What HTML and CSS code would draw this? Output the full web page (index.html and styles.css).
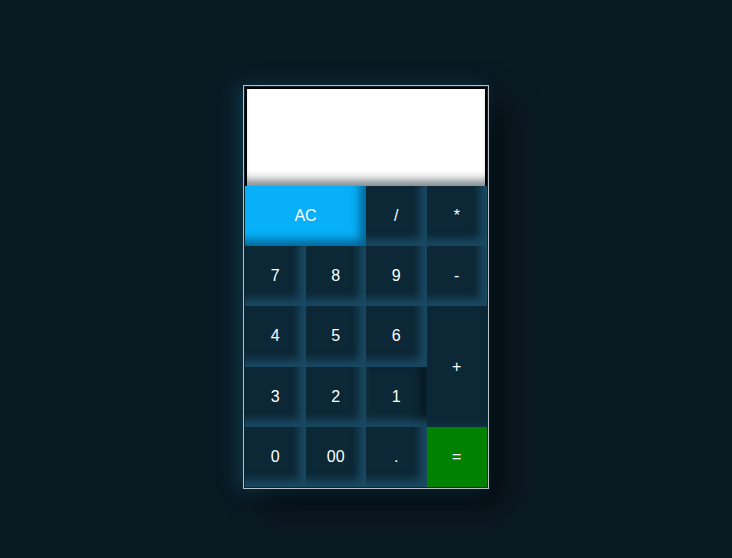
FILE: index.html
```html
<!DOCTYPE html>
<html>
<head>
<meta charset="utf-8">
<link rel="stylesheet" href="styles.css">
</head>
<body>
<div class="page">
  <div class="calc">
    <div class="display"></div>
    <div class="keys">
      <button class="key ac">AC</button>
      <button class="key">/</button>
      <button class="key">*</button>
      <button class="key">7</button>
      <button class="key">8</button>
      <button class="key">9</button>
      <button class="key">-</button>
      <button class="key">4</button>
      <button class="key">5</button>
      <button class="key">6</button>
      <button class="key plus">+</button>
      <button class="key">3</button>
      <button class="key">2</button>
      <button class="key one">1</button>
      <button class="key">0</button>
      <button class="key">00</button>
      <button class="key">.</button>
      <button class="key eq">=</button>
    </div>
  </div>
</div>
</body>
</html>
```

FILE: styles.css
```css
html, body {
  margin: 0;
  padding: 0;
  background: #0a1a23;
}
.page {
  width: 732px;
  height: 558px;
  display: flex;
  justify-content: center;
  align-items: flex-start;
  padding-top: 85px;
  box-sizing: border-box;
}
.calc {
  width: 242px;
  border: 1px solid #b9c0c4;
  padding: 1px;
  background: #0c2533;
  box-shadow: -6px 0 18px rgba(30, 130, 170, 0.28), 18px 18px 30px rgba(0, 0, 0, 0.55);
}
.display {
  height: 97px;
  border: 2px solid #000;
  border-bottom: none;
  background: #fff;
  box-shadow: inset 0 -12px 10px -6px rgba(40, 55, 60, 0.6);
}
.keys {
  display: grid;
  grid-template-columns: repeat(4, 60.5px);
  grid-auto-rows: 60.2px;
}
.key {
  border: none;
  margin: 0;
  padding: 0;
  background: #0c2736;
  color: #fff;
  font-family: "Liberation Sans", Arial, sans-serif;
  font-size: 16px;
  box-shadow: inset -10px -10px 9px -3px rgba(32, 88, 118, 0.7);
}
.ac {
  grid-column: span 2;
  background: #07b0f8;
  box-shadow: inset -9px -9px 10px -3px rgba(0, 40, 70, 0.55);
}
.plus {
  grid-row: span 2;
  background: #0c2736;
  box-shadow: inset 0 -6px 8px -4px rgba(28, 78, 105, 0.35);
}
.one {
  box-shadow: inset 0 -10px 9px -3px rgba(32, 88, 118, 0.7), inset -10px 0 8px -4px rgba(2, 10, 16, 0.65);
}
.eq {
  background: #008200;
  box-shadow: none;
}
```
